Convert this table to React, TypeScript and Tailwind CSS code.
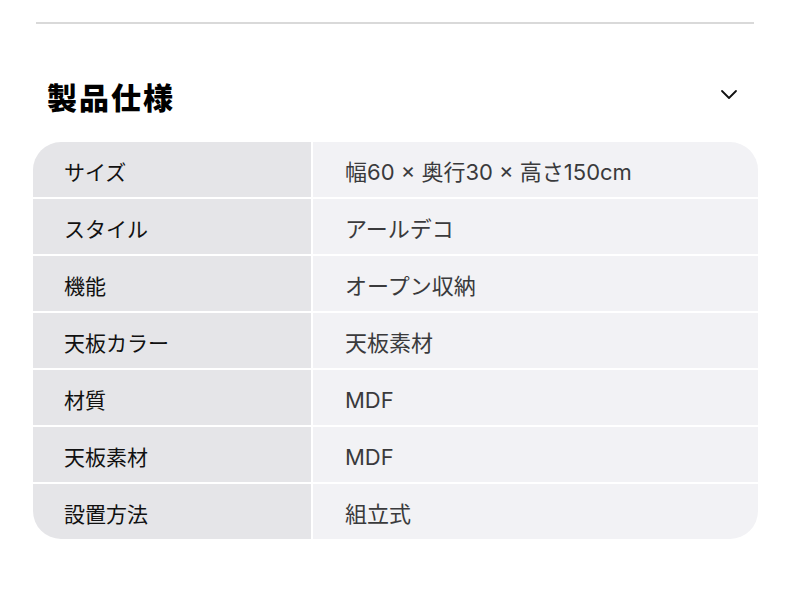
import React from 'react';

const specs: [string, string][] = [
  ['サイズ', '幅60 × 奥行30 × 高さ150cm'],
  ['スタイル', 'アールデコ'],
  ['機能', 'オープン収納'],
  ['天板カラー', '天板素材'],
  ['材質', 'MDF'],
  ['天板素材', 'MDF'],
  ['設置方法', '組立式'],
];

export default function App() {
  return (
    <div
      className="w-[790px] h-[596px] bg-white"
      style={{ fontFamily: 'Inter, "Noto Sans CJK JP", sans-serif' }}
    >
      <div className="pt-[22px] px-[36px]">
        <div className="h-[2px] bg-[#d9d9d9] w-[718px]" />
      </div>

      {/* 見出し */}
      <div className="flex items-center justify-between pl-[47px] pr-[52px] mt-[52px] h-[44px]">
        <h2 className="text-[30px] font-black text-black tracking-[2px]">製品仕様</h2>
        <svg width="18" height="12" viewBox="0 0 18 12" fill="none" className="-mt-[9px]">
          <path d="M2 3l7 7 7-7" stroke="#111" strokeWidth="1.8" strokeLinecap="round" strokeLinejoin="round" />
        </svg>
      </div>

      {/* 仕様テーブル */}
      <div className="ml-[33px] mt-[22px] w-[725px] rounded-[28px] overflow-hidden flex flex-col gap-[2px] bg-white">
        {specs.map(([label, value]) => (
          <div key={label} className="flex h-[55px] gap-[2px]">
            <div className="w-[278px] bg-[#e5e5e8] flex items-center pl-[31px] pt-[6px] text-[21px] text-[#111]">
              {label}
            </div>
            <div className="flex-1 bg-[#f2f2f5] flex items-center pl-[32px] pt-[6px] text-[22px] text-[#3a3a3c]">
              {value}
            </div>
          </div>
        ))}
      </div>
    </div>
  );
}
